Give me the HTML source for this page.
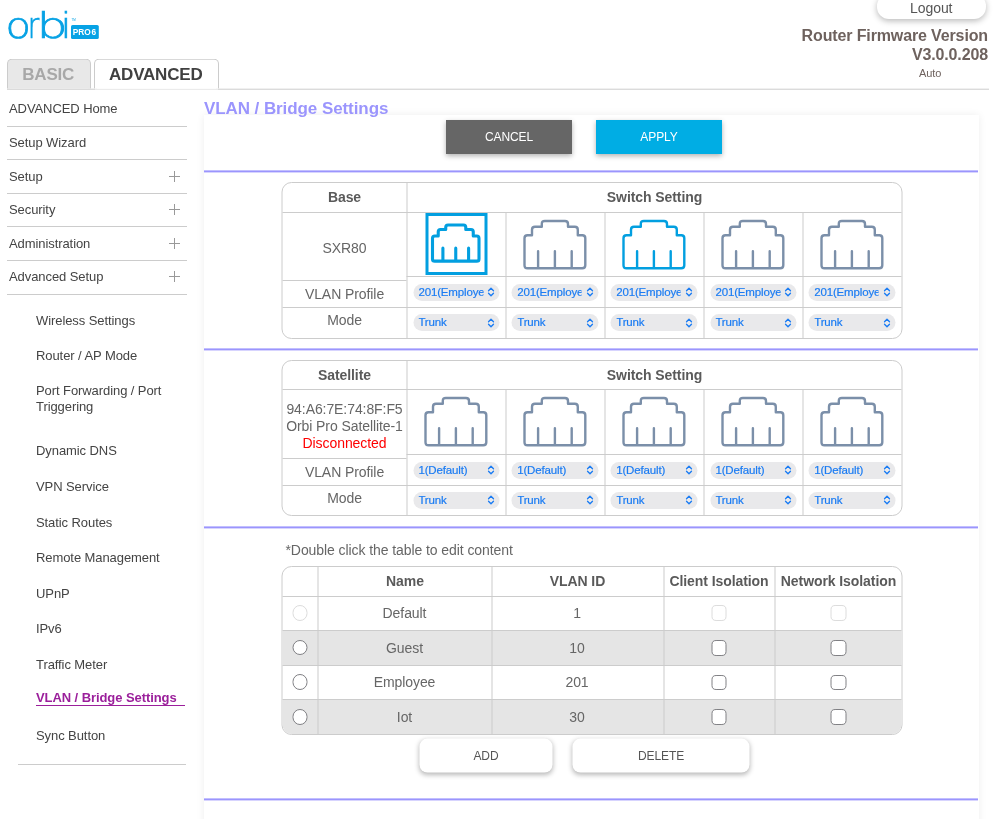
<!DOCTYPE html>
<html lang="en">
<head>
<meta charset="utf-8">
<title>VLAN / Bridge Settings</title>
<style>
*{box-sizing:border-box;margin:0;padding:0}
html,body{width:999px;height:819px;overflow:hidden;background:#fff}
body{font-family:"Liberation Sans",Arial,Helvetica,sans-serif;font-size:14px;color:#333;position:relative;letter-spacing:-0.08px}
#all{position:absolute;left:0;top:0;width:999px;height:819px;will-change:transform}
#logo{position:absolute;left:0;top:0}
#logout{position:absolute;left:876.5px;top:-6px;width:109.5px;height:25px;border-radius:12px;background:#fff;box-shadow:0 2px 6px rgba(0,0,0,.28);text-align:center;font-size:14px;line-height:28px;color:#555}
#fw{position:absolute;right:11px;top:26px;text-align:right;font-weight:bold;font-size:16px;line-height:19px;color:#6e625e;white-space:nowrap;letter-spacing:-0.13px}
#auto{position:absolute;left:919px;top:66.5px;font-size:11px;color:#6e625e}
#tabline{position:absolute;left:7px;top:89px;width:982px;height:1px;background:#ccc;transform:translateY(-.3px)}
#tabfaint{position:absolute;left:95px;top:89px;width:123px;height:1px;background:#f1f1f1;transform:translateY(-.3px)}
.tab{position:absolute;top:59px;height:31px;border:1px solid #ccc;border-bottom:none;border-radius:5px 5px 0 0;font-weight:bold;font-size:17px;text-align:center;line-height:30px;letter-spacing:-0.2px;transform:translateY(-.3px);padding-right:1.5px}
#tbasic{left:7px;width:84px;background:#e8e8e8;color:#a8a8a8;height:30px}
#tadv{left:94px;width:125px;background:#fff;color:#404040;height:30px}
.mi{position:absolute;left:7px;width:180px;height:34px;border-bottom:1px solid #ccc;padding-left:2px;line-height:33px;font-size:13px;color:#444}
.mi i{position:absolute;right:7px;top:11px;width:11px;height:11px}
.mi i:before{content:"";position:absolute;left:5px;top:0;width:1px;height:11px;background:#999}
.mi i:after{content:"";position:absolute;left:0;top:5px;width:11px;height:1px;background:#999}
.si{position:absolute;left:36px;font-size:13px;line-height:16px;color:#444;width:150px}
#panel{position:absolute;left:204px;top:115px;width:774.6px;height:720px;background:#fff;box-shadow:0 0 8px rgba(0,0,0,.07)}
#title{position:absolute;left:204px;top:99px;font-size:17px;font-weight:bold;color:#9b95fd;line-height:20px;white-space:nowrap;letter-spacing:-0.08px}
.hr{position:absolute;left:204px;width:774.3px;height:2px;background:#9b95fd;transform:translateY(.4px)}
.btn{position:absolute;height:34px;text-align:center;font-size:12px;line-height:34px;color:#fff;box-shadow:0 2px 5px rgba(0,0,0,.3)}
.wbtn{position:absolute;height:34px;text-align:center;font-size:12px;line-height:34px;color:#555;background:#fff;border-radius:8px;box-shadow:0 1.5px 5px rgba(0,0,0,.28);transform:translateY(.6px)}
.tb{position:absolute;border:1px solid #ccc;border-radius:10px;background:#fff;overflow:hidden}
.ln{position:absolute;background:#ccc}
.tx{position:absolute;text-align:center;font-size:14px;line-height:16px;color:#666;white-space:nowrap}
.b{font-weight:bold;color:#5a5a5a}
.sel{position:absolute;width:86.5px;height:17.3px;border-radius:8.7px;background:#e9e9eb;color:#1b7cf3;font-size:11.5px;line-height:17.3px;letter-spacing:-0.15px;-webkit-text-stroke:0.2px #1b7cf3;overflow:hidden;white-space:nowrap}
.sel span{position:absolute;left:5.3px;top:0;width:64.7px;overflow:hidden;white-space:nowrap;display:block}
.sel svg{position:absolute;right:5px;top:3.5px;width:7px;height:10px}
.pi{position:absolute;overflow:visible}
.rad{position:absolute;width:15.6px;height:15.6px;border-radius:50%;border:1.7px solid #808084;background:#fff}
.chk{position:absolute;width:15.6px;height:15.6px;border-radius:4.6px;border:1.7px solid #808084;background:#fff}
.dis{border-color:#dcdcdc}
.row{position:absolute;left:0;width:621px;background:#e5e5e5}
</style>
</head>
<body>
<div id="all">
<svg id="logo" width="110" height="50" viewBox="0 0 110 50">
<text y="38.1" font-family="'DejaVu Sans Light','DejaVu Sans',sans-serif" font-weight="200" font-size="35.5" fill="#06a2e5" stroke="#06a2e5" stroke-width="0.7"><tspan x="5.62" textLength="25.38" lengthAdjust="spacingAndGlyphs">o</tspan><tspan x="27.83" textLength="11.39" lengthAdjust="spacingAndGlyphs">r</tspan><tspan x="36.88" textLength="30.66" lengthAdjust="spacingAndGlyphs">b</tspan><tspan x="60.85" textLength="10.51" lengthAdjust="spacingAndGlyphs">i</tspan></text>
<rect x="71" y="25" width="27.8" height="14" rx="1.6" fill="#06a2e5"/>
<text x="72.7 78.24 84.23 91.5" y="35.1" font-family="'Liberation Sans',sans-serif" font-weight="bold" font-size="8.3" fill="#fff">PRO6</text>
<text x="71.5" y="20.5" font-family="'Liberation Sans',sans-serif" font-size="3" fill="#06a2e5">TM</text>
</svg>
<div id="tabline"></div>
<div id="tabfaint"></div>
<div class="tab" id="tbasic">BASIC</div>
<div class="tab" id="tadv">ADVANCED</div>
<div id="logout">Logout</div>
<div id="fw">Router Firmware Version<br>V3.0.0.208</div>
<div id="auto">Auto</div>
<div class="mi" style="top:93px;line-height:31px">ADVANCED Home</div>
<div class="mi" style="top:126px">Setup Wizard</div>
<div class="mi" style="top:160px">Setup<i></i></div>
<div class="mi" style="top:193px">Security<i></i></div>
<div class="mi" style="top:227px">Administration<i></i></div>
<div class="mi" style="top:261px;line-height:31px">Advanced Setup<i style="top:10px"></i></div>
<div class="si" style="top:313px">Wireless Settings</div>
<div class="si" style="top:348.3px">Router / AP Mode</div>
<div class="si" style="top:383px">Port Forwarding / Port<br>Triggering</div>
<div class="si" style="top:442.7px">Dynamic DNS</div>
<div class="si" style="top:478.8px">VPN Service</div>
<div class="si" style="top:514.6px">Static Routes</div>
<div class="si" style="top:549.9px">Remote Management</div>
<div class="si" style="top:586px">UPnP</div>
<div class="si" style="top:620.6px">IPv6</div>
<div class="si" style="top:657px">Traffic Meter</div>
<div class="si" style="top:728px">Sync Button</div>
<div class="si" style="top:690px;font-weight:bold;color:#9b1f9b;width:149px;height:16px;border-bottom:1px solid #9b1f9b;white-space:nowrap">VLAN / Bridge Settings</div>
<div class="ln" style="left:18px;top:764px;width:168px;height:1px"></div>
<div id="panel"></div>
<div id="title">VLAN / Bridge Settings</div>
<div class="btn" style="left:446px;top:120px;width:126px;background:#666">CANCEL</div>
<div class="btn" style="left:596px;top:120px;width:126px;background:#00ade4">APPLY</div>
<div class="hr" style="top:170px"></div>
<div class="hr" style="top:348px"></div>
<div class="hr" style="top:526px"></div>
<div class="hr" style="top:798px"></div>
<div style="position:absolute;left:0;top:0;transform:translateX(-0.5px)">
<div class="tb" style="left:282px;top:182px;width:621px;height:156.50px"></div>
<div class="ln" style="left:283px;top:212px;width:619px;height:1px"></div>
<div class="ln" style="left:407px;top:183px;width:1px;height:154.5px"></div>
<div class="ln" style="left:283px;top:280px;width:124px;height:1px"></div>
<div class="ln" style="left:407px;top:276px;width:495px;height:1px"></div>
<div class="ln" style="left:283px;top:307px;width:619px;height:1px"></div>
<div class="ln" style="left:505.8px;top:212px;width:1px;height:125.5px"></div>
<div class="ln" style="left:604.8px;top:212px;width:1px;height:125.5px"></div>
<div class="ln" style="left:704px;top:212px;width:1px;height:125.5px"></div>
<div class="ln" style="left:802.8px;top:212px;width:1px;height:125.5px"></div>
<div class="tx b" style="left:283px;width:124px;top:188.5px">Base</div>
<div class="tx b" style="left:408px;width:494px;top:188.5px">Switch Setting</div>
<div class="tx" style="left:283px;width:124px;top:239.5px">SXR80</div>
<div class="tx" style="left:283px;width:124px;top:285.5px">VLAN Profile</div>
<div class="tx" style="left:283px;width:124px;top:311.7px">Mode</div>
<div style="position:absolute;left:425.5px;top:213px;width:62px;height:62px;border:3px solid #029fe0"></div>
<svg class="pi" style="left:432.64px;top:224.61px;width:46.51px;height:36.18px" viewBox="0 0 60.8 47.3"><path d="M0 44.3V17.3Q0 14.3 3 14.3H7.5V8.8Q7.5 5.8 10.5 5.8H17.3V3Q17.3 0 20.3 0H40.5Q43.5 0 43.5 3V5.8H50.3Q53.3 5.8 53.3 8.8V14.3H57.8Q60.8 14.3 60.8 17.3V44.3Q60.8 47.3 57.8 47.3H3Q0 47.3 0 44.3ZM13.6 30.3V46.8M30.4 30.3V46.8M47.2 30.3V46.8" fill="none" stroke="#029fe0" stroke-width="4.05" stroke-linecap="round" stroke-linejoin="round"/></svg>
<div class="sel" style="left:413.6px;top:283.5px"><span>201(Employee)</span><svg viewBox="0 0 7 10"><path d="M1 3.8 L3.5 1.3 L6 3.8 M1 6.2 L3.5 8.7 L6 6.2" fill="none" stroke="#1b7cf3" stroke-width="1.4" stroke-linecap="round" stroke-linejoin="round"/></svg></div>
<div class="sel" style="left:413.6px;top:314px"><span>Trunk</span><svg viewBox="0 0 7 10"><path d="M1 3.8 L3.5 1.3 L6 3.8 M1 6.2 L3.5 8.7 L6 6.2" fill="none" stroke="#1b7cf3" stroke-width="1.4" stroke-linecap="round" stroke-linejoin="round"/></svg></div>
<svg class="pi" style="left:524.90px;top:220.65px;width:60.80px;height:47.30px" viewBox="0 0 60.8 47.3"><path d="M0 44.3V17.3Q0 14.3 3 14.3H7.5V8.8Q7.5 5.8 10.5 5.8H17.3V3Q17.3 0 20.3 0H40.5Q43.5 0 43.5 3V5.8H50.3Q53.3 5.8 53.3 8.8V14.3H57.8Q60.8 14.3 60.8 17.3V44.3Q60.8 47.3 57.8 47.3H3Q0 47.3 0 44.3ZM13.6 30.3V46.8M30.4 30.3V46.8M47.2 30.3V46.8" fill="none" stroke="#7b8fa9" stroke-width="2.40" stroke-linecap="round" stroke-linejoin="round"/></svg>
<div class="sel" style="left:512.4px;top:283.5px"><span>201(Employee)</span><svg viewBox="0 0 7 10"><path d="M1 3.8 L3.5 1.3 L6 3.8 M1 6.2 L3.5 8.7 L6 6.2" fill="none" stroke="#1b7cf3" stroke-width="1.4" stroke-linecap="round" stroke-linejoin="round"/></svg></div>
<div class="sel" style="left:512.4px;top:314px"><span>Trunk</span><svg viewBox="0 0 7 10"><path d="M1 3.8 L3.5 1.3 L6 3.8 M1 6.2 L3.5 8.7 L6 6.2" fill="none" stroke="#1b7cf3" stroke-width="1.4" stroke-linecap="round" stroke-linejoin="round"/></svg></div>
<svg class="pi" style="left:624.00px;top:220.65px;width:60.80px;height:47.30px" viewBox="0 0 60.8 47.3"><path d="M0 44.3V17.3Q0 14.3 3 14.3H7.5V8.8Q7.5 5.8 10.5 5.8H17.3V3Q17.3 0 20.3 0H40.5Q43.5 0 43.5 3V5.8H50.3Q53.3 5.8 53.3 8.8V14.3H57.8Q60.8 14.3 60.8 17.3V44.3Q60.8 47.3 57.8 47.3H3Q0 47.3 0 44.3ZM13.6 30.3V46.8M30.4 30.3V46.8M47.2 30.3V46.8" fill="none" stroke="#029fe0" stroke-width="2.40" stroke-linecap="round" stroke-linejoin="round"/></svg>
<div class="sel" style="left:611.4px;top:283.5px"><span>201(Employee)</span><svg viewBox="0 0 7 10"><path d="M1 3.8 L3.5 1.3 L6 3.8 M1 6.2 L3.5 8.7 L6 6.2" fill="none" stroke="#1b7cf3" stroke-width="1.4" stroke-linecap="round" stroke-linejoin="round"/></svg></div>
<div class="sel" style="left:611.4px;top:314px"><span>Trunk</span><svg viewBox="0 0 7 10"><path d="M1 3.8 L3.5 1.3 L6 3.8 M1 6.2 L3.5 8.7 L6 6.2" fill="none" stroke="#1b7cf3" stroke-width="1.4" stroke-linecap="round" stroke-linejoin="round"/></svg></div>
<svg class="pi" style="left:723.00px;top:220.65px;width:60.80px;height:47.30px" viewBox="0 0 60.8 47.3"><path d="M0 44.3V17.3Q0 14.3 3 14.3H7.5V8.8Q7.5 5.8 10.5 5.8H17.3V3Q17.3 0 20.3 0H40.5Q43.5 0 43.5 3V5.8H50.3Q53.3 5.8 53.3 8.8V14.3H57.8Q60.8 14.3 60.8 17.3V44.3Q60.8 47.3 57.8 47.3H3Q0 47.3 0 44.3ZM13.6 30.3V46.8M30.4 30.3V46.8M47.2 30.3V46.8" fill="none" stroke="#7b8fa9" stroke-width="2.40" stroke-linecap="round" stroke-linejoin="round"/></svg>
<div class="sel" style="left:710.6px;top:283.5px"><span>201(Employee)</span><svg viewBox="0 0 7 10"><path d="M1 3.8 L3.5 1.3 L6 3.8 M1 6.2 L3.5 8.7 L6 6.2" fill="none" stroke="#1b7cf3" stroke-width="1.4" stroke-linecap="round" stroke-linejoin="round"/></svg></div>
<div class="sel" style="left:710.6px;top:314px"><span>Trunk</span><svg viewBox="0 0 7 10"><path d="M1 3.8 L3.5 1.3 L6 3.8 M1 6.2 L3.5 8.7 L6 6.2" fill="none" stroke="#1b7cf3" stroke-width="1.4" stroke-linecap="round" stroke-linejoin="round"/></svg></div>
<svg class="pi" style="left:822.00px;top:220.65px;width:60.80px;height:47.30px" viewBox="0 0 60.8 47.3"><path d="M0 44.3V17.3Q0 14.3 3 14.3H7.5V8.8Q7.5 5.8 10.5 5.8H17.3V3Q17.3 0 20.3 0H40.5Q43.5 0 43.5 3V5.8H50.3Q53.3 5.8 53.3 8.8V14.3H57.8Q60.8 14.3 60.8 17.3V44.3Q60.8 47.3 57.8 47.3H3Q0 47.3 0 44.3ZM13.6 30.3V46.8M30.4 30.3V46.8M47.2 30.3V46.8" fill="none" stroke="#7b8fa9" stroke-width="2.40" stroke-linecap="round" stroke-linejoin="round"/></svg>
<div class="sel" style="left:809.4px;top:283.5px"><span>201(Employee)</span><svg viewBox="0 0 7 10"><path d="M1 3.8 L3.5 1.3 L6 3.8 M1 6.2 L3.5 8.7 L6 6.2" fill="none" stroke="#1b7cf3" stroke-width="1.4" stroke-linecap="round" stroke-linejoin="round"/></svg></div>
<div class="sel" style="left:809.4px;top:314px"><span>Trunk</span><svg viewBox="0 0 7 10"><path d="M1 3.8 L3.5 1.3 L6 3.8 M1 6.2 L3.5 8.7 L6 6.2" fill="none" stroke="#1b7cf3" stroke-width="1.4" stroke-linecap="round" stroke-linejoin="round"/></svg></div>
<div class="tb" style="left:282px;top:360px;width:621px;height:156.00px"></div>
<div class="ln" style="left:283px;top:389px;width:619px;height:1px"></div>
<div class="ln" style="left:407px;top:361px;width:1px;height:154px"></div>
<div class="ln" style="left:283px;top:458px;width:124px;height:1px"></div>
<div class="ln" style="left:407px;top:453.75px;width:495px;height:1px"></div>
<div class="ln" style="left:283px;top:485px;width:619px;height:1px"></div>
<div class="ln" style="left:505.8px;top:389px;width:1px;height:126px"></div>
<div class="ln" style="left:604.8px;top:389px;width:1px;height:126px"></div>
<div class="ln" style="left:704px;top:389px;width:1px;height:126px"></div>
<div class="ln" style="left:802.8px;top:389px;width:1px;height:126px"></div>
<div class="tx b" style="left:283px;width:124px;top:367px">Satellite</div>
<div class="tx b" style="left:408px;width:494px;top:367px">Switch Setting</div>
<div class="tx" style="left:283px;width:124px;top:400.5px;line-height:17px">94:A6:7E:74:8F:F5<br>Orbi Pro Satellite-1<br><span style="color:#f00">Disconnected</span></div>
<div class="tx" style="left:283px;width:124px;top:463.5px">VLAN Profile</div>
<div class="tx" style="left:283px;width:124px;top:490px">Mode</div>
<svg class="pi" style="left:426.00px;top:398.03px;width:60.80px;height:47.30px" viewBox="0 0 60.8 47.3"><path d="M0 44.3V17.3Q0 14.3 3 14.3H7.5V8.8Q7.5 5.8 10.5 5.8H17.3V3Q17.3 0 20.3 0H40.5Q43.5 0 43.5 3V5.8H50.3Q53.3 5.8 53.3 8.8V14.3H57.8Q60.8 14.3 60.8 17.3V44.3Q60.8 47.3 57.8 47.3H3Q0 47.3 0 44.3ZM13.6 30.3V46.8M30.4 30.3V46.8M47.2 30.3V46.8" fill="none" stroke="#7b8fa9" stroke-width="2.40" stroke-linecap="round" stroke-linejoin="round"/></svg>
<div class="sel" style="left:413.6px;top:461.8px"><span>1(Default)</span><svg viewBox="0 0 7 10"><path d="M1 3.8 L3.5 1.3 L6 3.8 M1 6.2 L3.5 8.7 L6 6.2" fill="none" stroke="#1b7cf3" stroke-width="1.4" stroke-linecap="round" stroke-linejoin="round"/></svg></div>
<div class="sel" style="left:413.6px;top:491.5px"><span>Trunk</span><svg viewBox="0 0 7 10"><path d="M1 3.8 L3.5 1.3 L6 3.8 M1 6.2 L3.5 8.7 L6 6.2" fill="none" stroke="#1b7cf3" stroke-width="1.4" stroke-linecap="round" stroke-linejoin="round"/></svg></div>
<svg class="pi" style="left:524.90px;top:398.03px;width:60.80px;height:47.30px" viewBox="0 0 60.8 47.3"><path d="M0 44.3V17.3Q0 14.3 3 14.3H7.5V8.8Q7.5 5.8 10.5 5.8H17.3V3Q17.3 0 20.3 0H40.5Q43.5 0 43.5 3V5.8H50.3Q53.3 5.8 53.3 8.8V14.3H57.8Q60.8 14.3 60.8 17.3V44.3Q60.8 47.3 57.8 47.3H3Q0 47.3 0 44.3ZM13.6 30.3V46.8M30.4 30.3V46.8M47.2 30.3V46.8" fill="none" stroke="#7b8fa9" stroke-width="2.40" stroke-linecap="round" stroke-linejoin="round"/></svg>
<div class="sel" style="left:512.4px;top:461.8px"><span>1(Default)</span><svg viewBox="0 0 7 10"><path d="M1 3.8 L3.5 1.3 L6 3.8 M1 6.2 L3.5 8.7 L6 6.2" fill="none" stroke="#1b7cf3" stroke-width="1.4" stroke-linecap="round" stroke-linejoin="round"/></svg></div>
<div class="sel" style="left:512.4px;top:491.5px"><span>Trunk</span><svg viewBox="0 0 7 10"><path d="M1 3.8 L3.5 1.3 L6 3.8 M1 6.2 L3.5 8.7 L6 6.2" fill="none" stroke="#1b7cf3" stroke-width="1.4" stroke-linecap="round" stroke-linejoin="round"/></svg></div>
<svg class="pi" style="left:624.00px;top:398.03px;width:60.80px;height:47.30px" viewBox="0 0 60.8 47.3"><path d="M0 44.3V17.3Q0 14.3 3 14.3H7.5V8.8Q7.5 5.8 10.5 5.8H17.3V3Q17.3 0 20.3 0H40.5Q43.5 0 43.5 3V5.8H50.3Q53.3 5.8 53.3 8.8V14.3H57.8Q60.8 14.3 60.8 17.3V44.3Q60.8 47.3 57.8 47.3H3Q0 47.3 0 44.3ZM13.6 30.3V46.8M30.4 30.3V46.8M47.2 30.3V46.8" fill="none" stroke="#7b8fa9" stroke-width="2.40" stroke-linecap="round" stroke-linejoin="round"/></svg>
<div class="sel" style="left:611.4px;top:461.8px"><span>1(Default)</span><svg viewBox="0 0 7 10"><path d="M1 3.8 L3.5 1.3 L6 3.8 M1 6.2 L3.5 8.7 L6 6.2" fill="none" stroke="#1b7cf3" stroke-width="1.4" stroke-linecap="round" stroke-linejoin="round"/></svg></div>
<div class="sel" style="left:611.4px;top:491.5px"><span>Trunk</span><svg viewBox="0 0 7 10"><path d="M1 3.8 L3.5 1.3 L6 3.8 M1 6.2 L3.5 8.7 L6 6.2" fill="none" stroke="#1b7cf3" stroke-width="1.4" stroke-linecap="round" stroke-linejoin="round"/></svg></div>
<svg class="pi" style="left:723.00px;top:398.03px;width:60.80px;height:47.30px" viewBox="0 0 60.8 47.3"><path d="M0 44.3V17.3Q0 14.3 3 14.3H7.5V8.8Q7.5 5.8 10.5 5.8H17.3V3Q17.3 0 20.3 0H40.5Q43.5 0 43.5 3V5.8H50.3Q53.3 5.8 53.3 8.8V14.3H57.8Q60.8 14.3 60.8 17.3V44.3Q60.8 47.3 57.8 47.3H3Q0 47.3 0 44.3ZM13.6 30.3V46.8M30.4 30.3V46.8M47.2 30.3V46.8" fill="none" stroke="#7b8fa9" stroke-width="2.40" stroke-linecap="round" stroke-linejoin="round"/></svg>
<div class="sel" style="left:710.6px;top:461.8px"><span>1(Default)</span><svg viewBox="0 0 7 10"><path d="M1 3.8 L3.5 1.3 L6 3.8 M1 6.2 L3.5 8.7 L6 6.2" fill="none" stroke="#1b7cf3" stroke-width="1.4" stroke-linecap="round" stroke-linejoin="round"/></svg></div>
<div class="sel" style="left:710.6px;top:491.5px"><span>Trunk</span><svg viewBox="0 0 7 10"><path d="M1 3.8 L3.5 1.3 L6 3.8 M1 6.2 L3.5 8.7 L6 6.2" fill="none" stroke="#1b7cf3" stroke-width="1.4" stroke-linecap="round" stroke-linejoin="round"/></svg></div>
<svg class="pi" style="left:822.00px;top:398.03px;width:60.80px;height:47.30px" viewBox="0 0 60.8 47.3"><path d="M0 44.3V17.3Q0 14.3 3 14.3H7.5V8.8Q7.5 5.8 10.5 5.8H17.3V3Q17.3 0 20.3 0H40.5Q43.5 0 43.5 3V5.8H50.3Q53.3 5.8 53.3 8.8V14.3H57.8Q60.8 14.3 60.8 17.3V44.3Q60.8 47.3 57.8 47.3H3Q0 47.3 0 44.3ZM13.6 30.3V46.8M30.4 30.3V46.8M47.2 30.3V46.8" fill="none" stroke="#7b8fa9" stroke-width="2.40" stroke-linecap="round" stroke-linejoin="round"/></svg>
<div class="sel" style="left:809.4px;top:461.8px"><span>1(Default)</span><svg viewBox="0 0 7 10"><path d="M1 3.8 L3.5 1.3 L6 3.8 M1 6.2 L3.5 8.7 L6 6.2" fill="none" stroke="#1b7cf3" stroke-width="1.4" stroke-linecap="round" stroke-linejoin="round"/></svg></div>
<div class="sel" style="left:809.4px;top:491.5px"><span>Trunk</span><svg viewBox="0 0 7 10"><path d="M1 3.8 L3.5 1.3 L6 3.8 M1 6.2 L3.5 8.7 L6 6.2" fill="none" stroke="#1b7cf3" stroke-width="1.4" stroke-linecap="round" stroke-linejoin="round"/></svg></div>
<div class="tx" style="left:286px;top:542px;text-align:left">*Double click the table to edit content</div>
<div class="tb" style="left:282px;top:566px;width:621px;height:169px"><div class="row" style="top:64px;height:34px"></div><div class="row" style="top:133px;height:35px"></div></div>
<div class="ln" style="left:283px;top:596px;width:619px;height:1px"></div>
<div class="ln" style="left:283px;top:630px;width:619px;height:1px"></div>
<div class="ln" style="left:283px;top:664.5px;width:619px;height:1px"></div>
<div class="ln" style="left:283px;top:699px;width:619px;height:1px"></div>
<div class="ln" style="left:318px;top:567px;width:1px;height:167px"></div>
<div class="ln" style="left:492px;top:567px;width:1px;height:167px"></div>
<div class="ln" style="left:663.5px;top:567px;width:1px;height:167px"></div>
<div class="ln" style="left:774.5px;top:567px;width:1px;height:167px"></div>
<div class="tx b" style="left:318.5px;width:174px;top:573px">Name</div>
<div class="tx b" style="left:492.5px;width:171px;top:573px">VLAN ID</div>
<div class="tx b" style="left:664px;width:111px;top:573px">Client Isolation</div>
<div class="tx b" style="left:775px;width:128px;top:573px">Network Isolation</div>
<div class="rad dis" style="left:292.6px;top:605.2px"></div>
<div class="tx" style="left:318px;width:174px;top:605px">Default</div>
<div class="tx" style="left:492px;width:171px;top:605px">1</div>
<div class="chk dis" style="left:711.6px;top:605.4px"></div>
<div class="chk dis" style="left:831px;top:605.4px"></div>
<div class="rad" style="left:292.6px;top:639.9px"></div>
<div class="tx" style="left:318px;width:174px;top:640px">Guest</div>
<div class="tx" style="left:492px;width:171px;top:640px">10</div>
<div class="chk" style="left:711.6px;top:640.1px"></div>
<div class="chk" style="left:831px;top:640.1px"></div>
<div class="rad" style="left:292.6px;top:674.4px"></div>
<div class="tx" style="left:318px;width:174px;top:674px">Employee</div>
<div class="tx" style="left:492px;width:171px;top:674px">201</div>
<div class="chk" style="left:711.6px;top:674.6px"></div>
<div class="chk" style="left:831px;top:674.6px"></div>
<div class="rad" style="left:292.6px;top:709.1px"></div>
<div class="tx" style="left:318px;width:174px;top:709px">Iot</div>
<div class="tx" style="left:492px;width:171px;top:709px">30</div>
<div class="chk" style="left:711.6px;top:709.3px"></div>
<div class="chk" style="left:831px;top:709.3px"></div>
<div class="wbtn" style="left:420px;top:738px;width:133px">ADD</div>
<div class="wbtn" style="left:573px;top:738px;width:177px">DELETE</div>
</div>
</div>
</body>
</html>
